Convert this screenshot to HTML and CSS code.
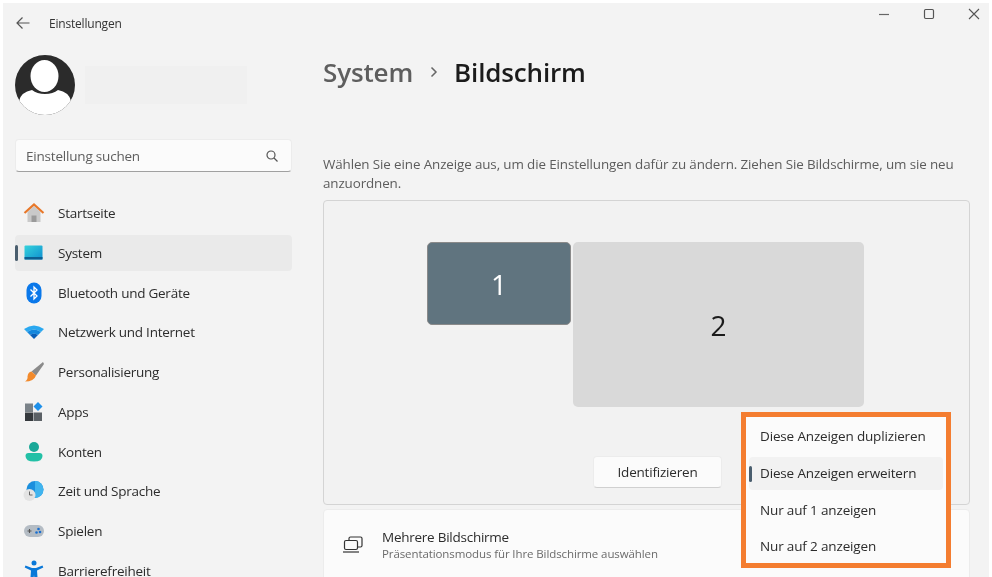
FILE: index.html
```html
<!DOCTYPE html>
<html lang="de">
<head>
<meta charset="utf-8">
<title>Einstellungen</title>
<link rel="stylesheet" href="styles.css">
</head>
<body>
<div class="window">
  <header class="titlebar">
    <svg class="back" width="16" height="14" viewBox="0 0 16 14"><path d="M14.5 7H2M7.5 1.5 2 7l5.5 5.5" fill="none" stroke="#555" stroke-width="1.2"/></svg>
    <span class="app-title">Einstellungen</span>
    <div class="controls">
      <svg width="12" height="12" viewBox="0 0 12 12"><path d="M1 6.5h10" stroke="#666" stroke-width="1.2"/></svg>
      <svg width="12" height="12" viewBox="0 0 12 12"><rect x="1.5" y="1.5" width="9" height="9" rx="1.2" fill="none" stroke="#555" stroke-width="1.2"/></svg>
      <svg width="12" height="12" viewBox="0 0 12 12"><path d="M1 1l10 10M11 1 1 11" stroke="#555" stroke-width="1.1"/></svg>
    </div>
  </header>
  <div class="body">
    <aside class="sidebar">
      <div class="profile">
        <svg class="avatar" width="60" height="60" viewBox="0 0 60 60">
          <defs><clipPath id="av"><circle cx="30" cy="30" r="30"/></clipPath></defs>
          <g clip-path="url(#av)">
            <rect width="60" height="60" fill="#2b2b2b"/>
            <ellipse cx="29.5" cy="21" rx="14" ry="16" fill="#fff"/>
            <path d="M4 60V46q2-9 13-11 5 4 13 4t13-4q11 2 13 11v14z" fill="#fff"/>
          </g>
        </svg>
        <div class="name-block"></div>
      </div>
      <div class="search">
        <span>Einstellung suchen</span>
        <svg width="14" height="14" viewBox="0 0 14 14"><circle cx="6" cy="6" r="4" fill="none" stroke="#555" stroke-width="1.2"/><path d="M9 9l3.5 3.5" stroke="#555" stroke-width="1.2"/></svg>
      </div>
      <nav class="nav">
        <a class="nav-item">
          <svg width="22" height="22" viewBox="0 0 22 22"><path d="M4.5 10v10h13V10L11 4z" fill="#c9c9c9"/><path d="M8.5 20v-6.5h5V20z" fill="#9a9a9a"/><path d="M1.5 11 11 2.5l9.500 8.500" fill="none" stroke="#e8782a" stroke-width="2.2"/></svg>
          <span>Startseite</span>
        </a>
        <a class="nav-item active">
          <svg width="22" height="22" viewBox="0 0 22 22"><defs><linearGradient id="sys" x1="0" y1="0" x2="1" y2="1"><stop offset="0" stop-color="#35d3dc"/><stop offset="1" stop-color="#0f8fd0"/></linearGradient></defs><rect x="1.5" y="3.5" width="18" height="14" rx="1" fill="url(#sys)"/><rect x="1.5" y="15" width="18" height="2.5" fill="#0d5f92"/></svg>
          <span>System</span>
        </a>
        <a class="nav-item">
          <svg width="22" height="22" viewBox="0 0 22 22"><rect x="3.5" y="0.5" width="15" height="21" rx="7.5" fill="#0a78ea"/><path d="M7.5 7.5 14 14l-3 3V5l3 3-6.5 6.5" fill="none" stroke="#fff" stroke-width="1.3"/></svg>
          <span>Bluetooth und Geräte</span>
        </a>
        <a class="nav-item">
          <svg width="22" height="22" viewBox="0 0 22 22"><path d="M1 8q10-7 20 0l-3 3q-7-5-14 0z" fill="#2aa8f0"/><path d="M4 11q7-5 14 0l-3 3q-4-2.5-8 0z" fill="#1487dd"/><path d="M7 14q4-2.5 8 0l-4 4z" fill="#0a5fb8"/></svg>
          <span>Netzwerk und Internet</span>
        </a>
        <a class="nav-item">
          <svg width="22" height="22" viewBox="0 0 22 22"><path d="M20 1 21 3 13 14.500 8.500 10.500z" fill="#8a8a8a"/><path d="M8.500 10.500 13 14.500q-2 6-11 6 3-2 2.500-5 .5-4.500 4-5" fill="#f28a2c"/></svg>
          <span>Personalisierung</span>
        </a>
        <a class="nav-item">
          <svg width="22" height="22" viewBox="0 0 22 22"><rect x="2" y="2.5" width="8" height="8.5" fill="#7a8288"/><rect x="2" y="11.5" width="8" height="8.5" fill="#34383c"/><rect x="10.5" y="11.5" width="8.5" height="8.5" fill="#5b6166"/><path d="M15 1l4.500 4.500L15 10l-4.500-4.500z" fill="#1e90ea"/></svg>
          <span>Apps</span>
        </a>
        <a class="nav-item">
          <svg width="22" height="22" viewBox="0 0 22 22"><circle cx="11" cy="6" r="5" fill="#1aa898"/><path d="M2.500 15q0-3 3-3h11q3 0 3 3 0 5.500-8.500 5.500T2.500 15z" fill="#22c0a6"/></svg>
          <span>Konten</span>
        </a>
        <a class="nav-item">
          <svg width="22" height="22" viewBox="0 0 22 22"><circle cx="12" cy="9.5" r="8.5" fill="#1b8fdd"/><path d="M12 1a8.500 8.500 0 0 1 0 17z" fill="#40b4ee"/><circle cx="6.5" cy="15" r="6" fill="#e3e3e3"/><path d="M6.500 11.500V15h3" fill="none" stroke="#666" stroke-width="1"/></svg>
          <span>Zeit und Sprache</span>
        </a>
        <a class="nav-item">
          <svg width="22" height="22" viewBox="0 0 22 22"><rect x="1" y="5" width="20" height="12" rx="6" fill="#b4bcc4"/><path d="M4.500 11h4M6.500 9v4" stroke="#555" stroke-width="1.1"/><circle cx="15.5" cy="9" r="1.3" fill="#1a6fd0"/><circle cx="13.5" cy="12.5" r="1.3" fill="#1a6fd0"/><circle cx="17" cy="12" r="1.3" fill="#1a6fd0"/></svg>
          <span>Spielen</span>
        </a>
        <a class="nav-item">
          <svg width="22" height="22" viewBox="0 0 22 22"><circle cx="11" cy="3" r="2.5" fill="#0a78d8"/><path d="M2.500 5.500 9 8h4l6.500-2.500.8 2-6.300 3 .8 11h-3L11 15l-.8 6.500h-3l.8-11-6.300-3z" fill="#0a78d8"/></svg>
          <span>Barrierefreiheit</span>
        </a>
      </nav>
    </aside>
    <main class="main">
      <h1 class="crumbs">
        <span class="crumb-parent">System</span>
        <svg class="crumb-sep" width="10" height="14" viewBox="0 0 10 14"><path d="M2.500 2.500 7 7l-4.500 4.500" fill="none" stroke="#666" stroke-width="1.5"/></svg>
        <span class="crumb-current">Bildschirm</span>
      </h1>
      <p class="intro">Wählen Sie eine Anzeige aus, um die Einstellungen dafür zu ändern. Ziehen Sie Bildschirme, um sie neu anzuordnen.</p>
      <section class="arrange">
        <div class="monitors">
          <div class="monitor monitor-one">1</div>
          <div class="monitor monitor-two">2</div>
        </div>
        <div class="arrange-actions"><button class="identify">Identifizieren</button></div>
      </section>
      <section class="card">
        <svg width="22" height="18" viewBox="0 0 22 18"><path d="M7 4V2.500Q7 1 8.500 1h10Q20 1 20 2.500v7Q20 11 18.500 11H16" fill="none" stroke="#333" stroke-width="1.2"/><rect x="2.500" y="4.500" width="13" height="9" rx="1.5" fill="#fafafa" stroke="#333" stroke-width="1.2"/><path d="M1 16h16" stroke="#333" stroke-width="1.2"/></svg>
        <div class="card-text">
          <div class="card-title">Mehrere Bildschirme</div>
          <div class="card-sub">Präsentationsmodus für Ihre Bildschirme auswählen</div>
        </div>
      </section>
    </main>
  </div>
  <div class="menu">
    <div class="menu-item">Diese Anzeigen duplizieren</div>
    <div class="menu-item selected">Diese Anzeigen erweitern</div>
    <div class="menu-item">Nur auf 1 anzeigen</div>
    <div class="menu-item">Nur auf 2 anzeigen</div>
  </div>
</div>
</body>
</html>
```
FILE: styles.css
```css
* { box-sizing: border-box; }
html, body { margin: 0; height: 577px; overflow: hidden; background: #fff; }
body { font-family: "Open Sans", "Noto Sans", sans-serif; color: #333; padding: 3px 3px 0; }
.window { position: relative; width: 986px; height: 574px; background: #f3f3f3; overflow: hidden; filter: blur(0.4px); }
.titlebar { display: flex; align-items: center; height: 40px; padding-left: 12px; }
.back { margin-right: 18px; }
.app-title { font-size: 12px; letter-spacing: -0.2px; color: #333; }
.controls { margin-left: auto; display: flex; gap: 33px; align-self: flex-start; padding: 5px 9px 0 0; }
.body { display: flex; height: 534px; }
.sidebar { width: 320px; padding-left: 12px; flex: none; }
.profile { display: flex; align-items: center; gap: 10px; margin-top: 12px; }
.name-block { width: 162px; height: 38px; background: #f0f0f0; }
.search { display: flex; align-items: center; justify-content: space-between; width: 277px; height: 33px; margin-top: 24px; padding: 0 12px 0 10px; background: #fbfbfb; border: 1px solid #ececec; border-bottom: 1px solid #a0a0a0; border-radius: 4px; font-size: 13.5px; letter-spacing: -0.2px; color: #5e5e5e; }
.nav { display: flex; flex-direction: column; gap: 3.75px; margin-top: 23px; }
.nav-item { position: relative; display: flex; align-items: center; gap: 13px; width: 277px; height: 36px; padding-left: 8px; font-size: 13.5px; letter-spacing: -0.25px; color: #2c2c2c; border-radius: 4px; flex: none; }
.nav-item.active { background: #eaeaea; }
.nav-item.active::before { content: ""; position: absolute; left: 0; top: 10px; width: 3px; height: 16px; border-radius: 2px; background: #4a5e6e; }
.main { width: 647px; flex: none; }
.crumbs { display: flex; align-items: center; margin: 8px 0 0; font-size: 26px; letter-spacing: -0.15px; font-weight: 600; line-height: 42px; }
.crumb-parent { color: #5e5e5e; }
.crumb-sep { margin: 0 15px 0 16px; }
.crumb-current { color: #1b1b1b; }
.intro { margin: 62px 0 0; font-size: 13.4px; letter-spacing: -0.11px; line-height: 19px; color: #5c5c5c; }
.arrange { height: 305px; margin-top: 7px; padding: 41px 0 0 103px; background: #f2f2f2; border: 1px solid #d4d4d4; border-radius: 4px; }
.monitors { display: flex; gap: 2px; align-items: flex-start; }
.monitor { display: flex; align-items: center; justify-content: center; border-radius: 5px; font-size: 28px; font-weight: 400; }
.monitor-one { width: 144px; height: 83px; background: #60747f; color: #fff; border: 1px solid #8a8a8a; }
.monitor-two { width: 291px; height: 165px; background: #d9d9d9; color: #1b1b1b; }
.arrange-actions { margin: 49px 0 0 166px; }
.identify { width: 129px; height: 32px; padding: 0; background: #fbfbfb; border: 1px solid #ececec; border-bottom-color: #d0d0d0; border-radius: 4px; font: inherit; font-size: 13.5px; letter-spacing: -0.2px; color: #2c2c2c; }
.card { display: flex; align-items: center; gap: 18px; height: 72px; margin-top: 4px; padding: 0 0 0 18px; background: #fbfbfb; border: 1px solid #ececec; border-radius: 4px; }
.card-title { font-size: 13.5px; letter-spacing: -0.25px; line-height: 18px; color: #2c2c2c; }
.card-sub { font-size: 11.5px; letter-spacing: -0.1px; line-height: 16px; color: #6b6b6b; }
.menu { position: absolute; left: 738px; top: 409px; width: 210px; height: 156px; padding: 1px 3px; display: flex; flex-direction: column; background: #fbfbfb; border: 5px solid #f47d30; }
.menu-item { position: relative; display: flex; align-items: center; height: 36.5px; padding-left: 11px; font-size: 13.5px; letter-spacing: -0.15px; color: #2c2c2c; border-radius: 4px; flex: none; }
.menu-item.selected { background: #f2f2f2; height: 33px; margin: 2px 0; }
.menu-item.selected::before { content: ""; position: absolute; left: 0; top: 9px; width: 3px; height: 16px; border-radius: 2px; background: #4a5e6e; }
```
